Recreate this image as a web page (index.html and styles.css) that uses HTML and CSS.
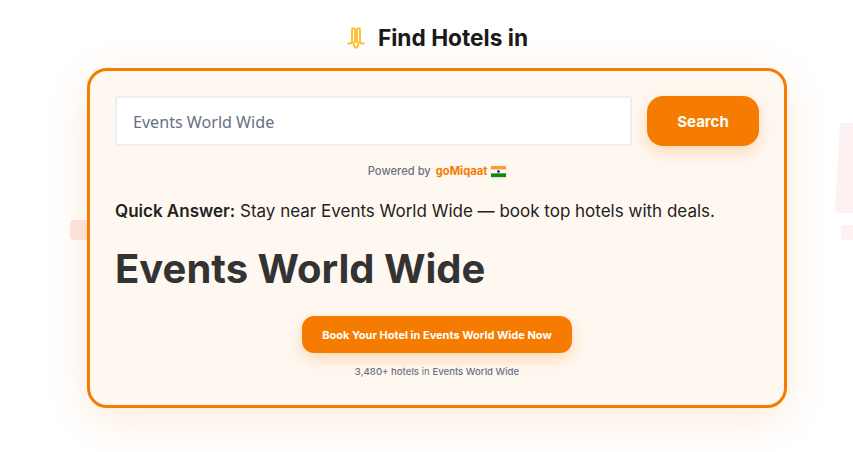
FILE: index.html
```html
<!DOCTYPE html>
<html lang="en">

<head>
    <meta charset="utf-8" />
    <meta name="viewport" content="width=device-width" />
    <title>Find Hotels in Events World Wide</title>
    <link rel="stylesheet" href="styles.css">
</head>
<body>
    <div class="deco deco-left"></div>
    <div class="deco deco-bang"></div>
    <div class="deco deco-dot"></div>

    <!-- Title start -->
    <header class="title">
        <svg class="title-icon" viewBox="0 0 18 22" width="18" height="22" fill="none" stroke="#fbc02d" stroke-width="1.900" stroke-linecap="round" stroke-linejoin="round">
            <path d="M1 16.500h2c1.400 0 2-.8 2-2.200V3.500C5 2.200 5.600 1.200 6.500 1.200S8 2.200 8 3.500V15" />
            <path d="M17 16.500h-2c-1.400 0-2-.8-2-2.200V3.500c0-1.300-.6-2.300-1.500-2.300S10 2.200 10 3.500V15" />
            <path d="M6.500 15.500c0 2.500 1.200 5.300 2.500 5.300s2.500-2.800 2.500-5.300" />
        </svg>
        <h2>Find Hotels in</h2>
    </header>
    <!-- Title end -->

    <main class="card">
        <form class="search-form">
            <input class="search-input" type="text" placeholder="Events World Wide" />
            <button class="search-button" type="button">Search</button>
        </form>

        <div class="powered">
            <span>Powered by</span>
            <b class="brand">goMiqaat</b>
            <svg class="flag" viewBox="0 0 15 11" width="15" height="11">
                <rect width="15" height="3.670" fill="#ff9933" />
                <rect y="3.670" width="15" height="3.670" fill="#ffffff" />
                <rect y="7.330" width="15" height="3.670" fill="#138808" />
                <circle cx="7.500" cy="5.500" r="1.300" fill="#000080" />
            </svg>
        </div>

        <p class="answer"><strong>Quick Answer:</strong> Stay near Events World Wide — book top hotels with deals.</p>

        <h1 class="place">Events World Wide</h1>

        <div class="book">
            <a class="book-button" href="#">Book Your Hotel in Events World Wide Now</a>
            <p class="count"><b>3,480+ hotels</b> in <b>Events World Wide</b></p>
        </div>
    </main>
</body>

</html>
```

FILE: styles.css
```css
:root {
    --primary-color: #f57c00;
    --text-color: #222222;
    --muted-color: #6b7280;
}

* {
    box-sizing: border-box;
    margin: 0;
    padding: 0;
}

html {
    height: 100%;
    overflow: hidden;
}

/* the page runs a little wider than the window, so its centre sits right of the middle */
body {
    background-color: #fff;
    font-family: Inter, Arial, sans-serif;
    color: var(--text-color);
    width: 874px;
    height: 452px;
    overflow: hidden;
    position: relative;
}

a,
button {
    cursor: pointer;
}

/* faint shapes behind the card */
.deco {
    position: absolute;
    background-color: #fdf1f1;
    border-radius: 4px;
}

.deco-left {
    left: 70px;
    top: 220px;
    width: 30px;
    height: 20px;
    background-color: #fde6e2;
}

.deco-bang {
    left: 835px;
    top: 123px;
    width: 30px;
    height: 90px;
    clip-path: polygon(5px 0, 100% 0, 100% 100%, 0 100%);
}

.deco-dot {
    left: 841px;
    top: 225px;
    width: 30px;
    height: 15px;
}

.title {
    display: flex;
    align-items: center;
    justify-content: center;
    gap: 13px;
    padding-top: 26px;
    padding-left: 1px;
    height: 68px;
    padding-bottom: 20px;
    position: relative;
}

.title-icon {
    margin-top: 1px;
}

.title h2 {
    font-size: 22.700px;
    font-weight: 700;
    color: #1a1a1a;
}

.card {
    position: relative;
    width: 700px;
    height: 340px;
    margin: 0 auto;
    padding: 25px;
    background-color: #fff8f1;
    border: 3px solid var(--primary-color);
    border-radius: 20px;
    box-shadow: 0 10px 40px rgba(245, 124, 0, 0.16);
}

.search-form {
    display: flex;
    gap: 15px;
}

.search-input {
    flex: 1;
    height: 50px;
    padding: 1px 16px 0;
    font-family: "Noto Sans", Arial, sans-serif;
    font-size: 16.100px;
    background-color: #fff;
    border: 2px solid #eceef0;
    border-radius: 3px;
    outline: none;
}

.search-input::placeholder {
    color: #667085;
    opacity: 1;
}

.search-button {
    width: 112px;
    height: 50px;
    border: none;
    border-radius: 16px;
    background-color: var(--primary-color);
    color: #fff;
    font-family: Inter, Arial, sans-serif;
    font-size: 15px;
    font-weight: 700;
    box-shadow: 0 6px 16px rgba(245, 124, 0, 0.25);
}

.powered {
    display: flex;
    align-items: center;
    justify-content: center;
    margin-top: 18px;
    height: 14px;
    font-size: 11.200px;
    font-weight: 500;
    color: var(--muted-color);
}

.brand {
    margin-left: 5px;
    color: var(--primary-color);
    font-weight: 700;
}

.flag {
    margin-left: 4px;
    box-shadow: 0 1px 2px rgba(0, 0, 0, 0.15);
}

.answer {
    margin-top: 21px;
    font-size: 17px;
    line-height: 24px;
}

.answer strong {
    font-weight: 600;
}

.place {
    margin-top: 20px;
    font-size: 40px;
    line-height: 52px;
    font-weight: 700;
    color: #333333;
}

.book {
    display: flex;
    flex-direction: column;
    align-items: center;
    margin-top: 21px;
}

.book-button {
    display: block;
    padding: 0 20px;
    line-height: 38px;
    height: 37px;
    border-radius: 12px;
    background-color: var(--primary-color);
    color: #fff;
    font-size: 11px;
    font-weight: 700;
    text-decoration: none;
    box-shadow: 0 6px 16px rgba(245, 124, 0, 0.25);
}

.count {
    margin-top: 12px;
    font-size: 9.600px;
    line-height: 13px;
    color: var(--muted-color);
}

.count b {
    font-weight: 500;
}
```
